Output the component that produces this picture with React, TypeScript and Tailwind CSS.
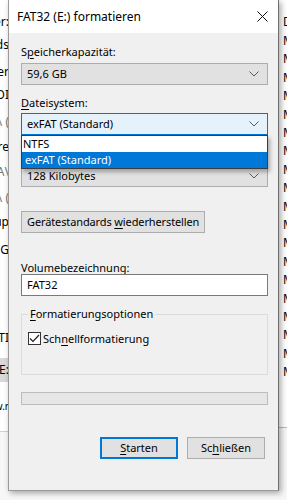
import React from "react";

const U = ({ children }: { children: React.ReactNode }) => (
  <span className="underline underline-offset-[2px] decoration-[1px]">{children}</span>
);

const Chevron = () => (
  <svg width="10" height="6" viewBox="0 0 10 6" className="shrink-0">
    <polyline points="0.5,0.5 5,5 9.5,0.5" fill="none" stroke="#5a5a5a" strokeWidth="1" />
  </svg>
);

const Combo = ({ text, focused }: { text: string; focused?: boolean }) => (
  <div
    className={
      focused
        ? "h-[22px] flex items-center justify-between pl-[5px] pr-[8px] border border-[#0078d7] bg-[#e5f1fb]"
        : "h-[22px] flex items-center justify-between pl-[5px] pr-[8px] border border-[#adadad] bg-[#e1e1e1]"
    }
  >
    <span>{text}</span>
    <Chevron />
  </div>
);

export default function App() {
  const leftFrags: [number, string, string?][] = [
    [22, "Datenträger:"],
    [45, "Bilds"],
    [72, "Ordner"],
    [95, "WINDOI"],
    [122, "C:\\ (", "#777"],
    [147, "Ordnre"],
    [172, "C:\\A\\", "#777"],
    [198, "D:\\ (", "#777"],
    [222, "Backup"],
    [250, "USB G"],
    [338, "FAT32 ETI"],
  ];
  const rightRows = Array.from({ length: 19 }, (_, i) => 41 + i * 18.4);
  return (
    <div
      className="relative w-[287px] h-[500px] overflow-hidden bg-[#f7f7f7] text-[11px] leading-[16px] text-black"
      style={{ fontFamily: '"Noto Sans", "Open Sans", sans-serif' }}
    >
      {/* background window (left) */}
      <div className="absolute left-0 top-0 w-[10px] h-[432px] bg-white border-b border-[#cfcfcf]" />
      <div className="absolute left-0 top-[358px] w-[10px] h-[24px] bg-[#d9d9d9]" />
      {leftFrags.map(([y, t, c]) => (
        <div
          key={y}
          className="absolute right-[278px] whitespace-nowrap text-[12px] leading-[16px]"
          style={{ top: y - 8, color: c ?? "#000" }}
        >
          {t}
        </div>
      ))}
      <div className="absolute right-[278px] top-[362px] whitespace-nowrap text-[12px] leading-[16px]">Laufwerk (E:</div>
      <div className="absolute right-[278px] top-[398px] whitespace-nowrap leading-[16px] text-[10px]">Laufw.r</div>

      {/* background window (right) */}
      <div className="absolute left-[279px] top-0 w-[8px] h-[428px] bg-white border-b border-[#bdbdbd]" />
      <div className="absolute left-[283px] top-[14px] text-[12px] leading-[16px]">D</div>
      {rightRows.map((y) => (
        <div key={y} className="absolute left-[283px] text-[12px] leading-[16px]" style={{ top: y - 8 }}>
          M
        </div>
      ))}

      {/* dialog window */}
      <div className="absolute left-[8px] top-0 w-[271px] h-[491px] border border-t-0 border-[#9a9a9a] border-r-[#6f6f6f] bg-[#f0f0f0] shadow-[2px_2px_6px_rgba(0,0,0,0.35)] flex flex-col">
        {/* title bar */}
        <div className="h-[33px] bg-white flex items-center justify-between pl-[8px] pr-[10px] shrink-0">
          <span className="text-[12px]">FAT32 (E:) formatieren</span>
          <svg width="11" height="11" viewBox="0 0 11 11">
            <path d="M0.5 0.5 L10.5 10.5 M10.5 0.5 L0.5 10.5" stroke="#111" strokeWidth="1" />
          </svg>
        </div>

        {/* body */}
        <div className="relative flex flex-col pl-[12px] pr-[10px] pt-[11px]">
          <div className="h-[19px]">
            S<U>p</U>eicherkapazität:
          </div>
          <Combo text="59,6 GB" />

          <div className="mt-[10px] h-[18px]">
            <U>D</U>ateisystem:
          </div>
          <Combo text="exFAT (Standard)" focused />

          <div className="mt-[10px] h-[20px]">
            <U>G</U>röße der Zuordnungseinheiten:
          </div>
          <Combo text="128 Kilobytes" />

          {/* open dropdown list */}
          <div className="absolute left-[12px] right-[10px] top-[102px] border border-[#3c3c3c] bg-white shadow-[2px_3px_4px_rgba(0,0,0,0.3)] z-10">
            <div className="h-[16px] pl-[1px]">NTFS</div>
            <div className="h-[16px] pl-[3px] bg-[#0078d7] text-white">exFAT (Standard)</div>
          </div>

          <div className="mt-[24px] flex">
            <div className="h-[22px] px-[5px] flex items-center border border-[#adadad] bg-[#e1e1e1] whitespace-nowrap tracking-[-0.12px]">
              <span>
                Gerätestandards <U>w</U>iederherstellen
              </span>
            </div>
          </div>

          <div className="mt-[27px] h-[14px]">
            Volume<U>b</U>ezeichnung:
          </div>
          <div className="h-[22px] flex items-center pl-[5px] border border-[#7a7a7a] bg-white">FAT32</div>

          {/* group box */}
          <div className="relative mt-[18px] h-[61px] border border-[#dcdcdc]">
            <div className="absolute left-[6px] top-[-9px] px-[2px] bg-[#f0f0f0]">
              <U>F</U>ormatierungsoptionen
            </div>
            <div className="mt-[17px] ml-[6px] h-[13px] flex items-center gap-[2px]">
              <div className="w-[13px] h-[13px] border border-[#333] bg-white flex items-center justify-center">
                <svg width="11" height="9" viewBox="0 0 11 9">
                  <polyline points="1,4.5 4,7.5 10,1" fill="none" stroke="#222" strokeWidth="1.2" />
                </svg>
              </div>
              <span>
                Sch<U>n</U>ellformatierung
              </span>
            </div>
          </div>

          {/* progress bar */}
          <div className="mt-[17px] h-[13px] border border-[#bcbcbc] bg-[#e6e6e6]" />

          {/* buttons */}
          <div className="mt-[32px] flex justify-end gap-[9px] pr-[3px]">
            <div className="w-[78px] h-[22px] flex items-center justify-center border-2 border-[#0078d7] bg-[#e1e1e1]">
              <span>
                <U>S</U>tarten
              </span>
            </div>
            <div className="w-[78px] h-[22px] flex items-center justify-center border border-[#adadad] bg-[#e1e1e1]">
              <span>
                Sc<U>h</U>ließen
              </span>
            </div>
          </div>
        </div>
      </div>
    </div>
  );
}
